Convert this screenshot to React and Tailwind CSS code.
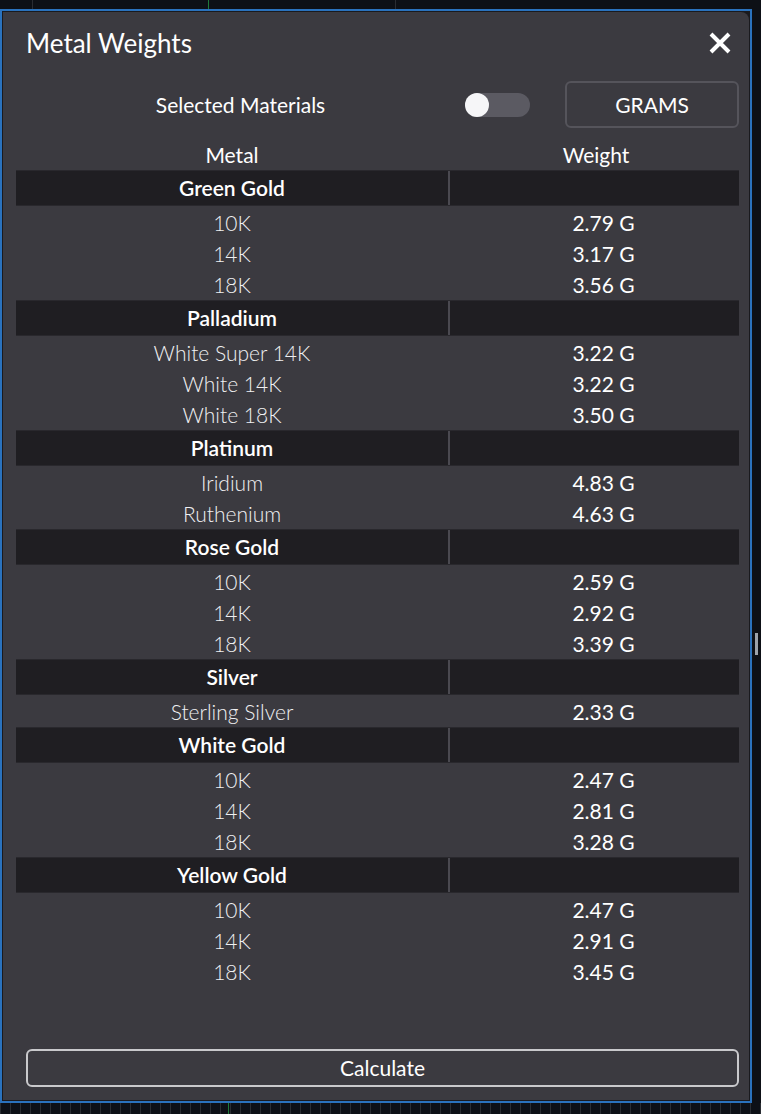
import React from "react";

const groups = [
  { name: "Green Gold", rows: [["10K", "2.79 G"], ["14K", "3.17 G"], ["18K", "3.56 G"]] },
  { name: "Palladium", rows: [["White Super 14K", "3.22 G"], ["White 14K", "3.22 G"], ["White 18K", "3.50 G"]] },
  { name: "Platinum", rows: [["Iridium", "4.83 G"], ["Ruthenium", "4.63 G"]] },
  { name: "Rose Gold", rows: [["10K", "2.59 G"], ["14K", "2.92 G"], ["18K", "3.39 G"]] },
  { name: "Silver", rows: [["Sterling Silver", "2.33 G"]] },
  { name: "White Gold", rows: [["10K", "2.47 G"], ["14K", "2.81 G"], ["18K", "3.28 G"]] },
  { name: "Yellow Gold", rows: [["10K", "2.47 G"], ["14K", "2.91 G"], ["18K", "3.45 G"]] },
];

const GroupHeader = ({ name }) => (
  <div className="flex h-9 border-y border-[#29282d] bg-[#1f1e22]">
    <div className="flex w-[432px] items-center justify-center text-[21px] font-semibold text-white">
      {name}
    </div>
    <div className="w-[2px] bg-[#4a4950]" />
    <div className="flex-1" />
  </div>
);

const Row = ({ label, weight }) => (
  <div className="flex h-[31px] items-center">
    <div className="w-[432px] text-center text-[21px] font-light text-[#f0f0f2]">{label}</div>
    <div className="flex-1 pl-[20px] text-center text-[21px] text-white">{weight}</div>
  </div>
);

const App = () => {
  return (
    <div className="relative h-[1114px] w-[761px] overflow-hidden bg-[#0d1016] font-['Lato',sans-serif]">
      {/* canvas lines behind the dialog */}
      <div className="absolute left-[208px] top-0 h-[9px] w-px bg-[#1f7a3a]" />
      <div className="absolute left-[32px] top-0 h-[9px] w-px bg-[#2a2d33]" />
      <div className="absolute left-[395px] top-0 h-[9px] w-px bg-[#2a2d33]" />
      <div className="absolute left-[755px] top-[633px] h-[22px] w-[3px] bg-[#9da3ab]" />
      <div className="absolute bottom-0 left-0 h-[11px] w-full bg-[repeating-linear-gradient(90deg,#2a2d33_0px,#2a2d33_1px,transparent_1px,transparent_10px)]" />
      <div className="absolute bottom-0 left-[228px] h-[11px] w-px bg-[#1f7a3a]" />

      <div className="relative mt-[9px] h-[1094px] w-[752px] border-2 border-[#2a72bd] bg-[#1a1a1e] p-px">
        <div className="flex h-full flex-col rounded-tr-lg bg-[#3b3a40] pb-[13px] pl-[13px] pr-[10px]">
          <div className="mt-[16px] flex h-[30px] items-center justify-between pl-[10px] pr-[7px]">
            <span className="text-[26px] text-white">Metal Weights</span>
            <svg width="24" height="24" viewBox="0 0 24 24" className="text-white">
              <path d="M3 3 L21 21 M21 3 L3 21" stroke="currentColor" strokeWidth="4" strokeLinecap="butt" />
            </svg>
          </div>

          <div className="mt-[23px] flex h-[47px] items-center">
            <div className="flex-1 text-center text-[21px] text-white">Selected Materials</div>
            <div className="flex h-6 w-[65px] items-center rounded-full bg-[#5b5a62]">
              <div className="h-6 w-6 rounded-full bg-[#f6f6f8]" />
            </div>
            <button className="ml-[35px] h-[47px] w-[174px] rounded-md border-2 border-[#55545b] text-[21px] text-white">
              GRAMS
            </button>
          </div>

          <div className="mt-[12px] flex h-[30px] items-center text-[21px] text-white">
            <div className="w-[432px] text-center">Metal</div>
            <div className="flex-1 pl-[5px] text-center">Weight</div>
          </div>

          <div className="flex flex-col">
            {groups.map((g) => (
              <div key={g.name}>
                <GroupHeader name={g.name} />
                <div className="pt-px">
                  {g.rows.map(([label, weight]) => (
                    <Row key={label} label={label} weight={weight} />
                  ))}
                </div>
              </div>
            ))}
          </div>

          <button className="mt-auto ml-[10px] h-[38px] rounded-md border-2 border-[#c9c9cc] text-[21px] text-white">
            Calculate
          </button>
        </div>
      </div>
    </div>
  );
};

export default App;
